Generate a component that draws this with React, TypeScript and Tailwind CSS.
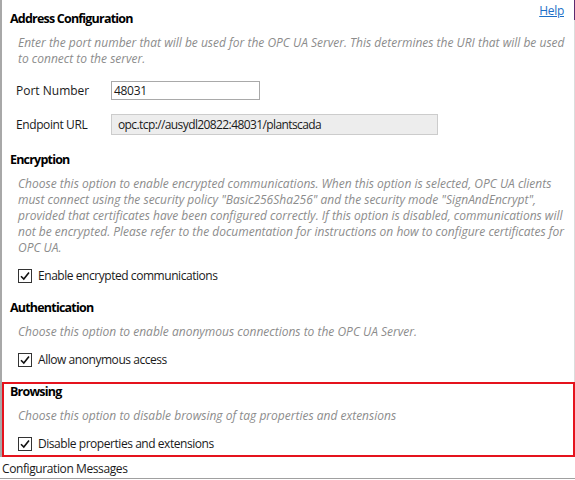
import React from "react";

const font = { fontFamily: '"Open Sans", "Noto Sans", sans-serif' };

function Check({ label }: { label: string }) {
  return (
    <div className="flex items-center h-[14px] mt-[13px] pl-[16px]">
      <div className="w-[14px] h-[14px] border border-[#333333] bg-white flex items-center justify-center shrink-0">
        <svg width="12" height="12" viewBox="0 0 12 12">
          <path d="M2 6.2 L4.8 9 L10 2.5" fill="none" stroke="#111111" strokeWidth="1.6" />
        </svg>
      </div>
      <span className="ml-[6px] text-[12px] leading-[16px] tracking-[-0.45px] text-[#1a1a1a]">{label}</span>
    </div>
  );
}

function Heading({ children, className = "" }: { children: React.ReactNode; className?: string }) {
  return (
    <div className={"pl-[8px] text-[12.5px] leading-[16px] font-bold tracking-[-0.8px] text-black " + className}>{children}</div>
  );
}

function Desc({ children }: { children: React.ReactNode }) {
  return (
    <div className="mt-[8px] pl-[16px] pr-[8px] text-[12px] leading-[16px] italic text-[#8c8c8c]">{children}</div>
  );
}

export default function App() {
  return (
    <div className="w-[575px] h-[480px] bg-white relative overflow-hidden" style={font}>
      <div className="flex flex-col h-[479px] border-b border-[#a0a0a0]">
        <div className="flex flex-col h-[457px] border-l-2 border-[#a8a8a8] border-r border-r-[#dcdcdc] relative">
          <div className="flex justify-between items-start">
            <Heading className="mt-[11px]">Address Configuration</Heading>
            <a className="mt-[3px] mr-[10px] text-[12px] leading-[16px] tracking-[-0.3px] text-[#1c6fc7] underline">Help</a>
          </div>
          <Desc>
            Enter the port number that will be used for the OPC UA Server. This determines the URI that will be used to connect to the server.
          </Desc>
          <div className="flex items-center mt-[14px] pl-[14px] h-[19px]">
            <span className="w-[95px] text-[12px] text-[#1a1a1a]">Port Number</span>
            <div className="w-[149px] h-[19px] border border-[#a9a9a9] bg-white text-[12px] leading-[17px] pl-[2px] tracking-[-0.3px] text-[#1a1a1a]">48031</div>
          </div>
          <div className="flex items-center mt-[14px] pl-[14px] h-[21px]">
            <span className="w-[95px] text-[12px] tracking-[-0.4px] text-[#1a1a1a]">Endpoint URL</span>
            <div className="w-[327px] h-[21px] border border-[#cccccc] bg-[#ededed] text-[12px] leading-[19px] pl-[6px] tracking-[-0.6px] text-[#1a1a1a]">opc.tcp://ausydl20822:48031/plantscada</div>
          </div>
          <Heading className="mt-[17px]">Encryption</Heading>
          <Desc>
            Choose this option to enable encrypted communications. When this option is selected, OPC UA clients must connect using the security policy "Basic256Sha256" and the security mode "SignAndEncrypt", provided that certificates have been configured correctly. If this option is disabled, communications will not be encrypted. Please refer to the documentation for instructions on how to configure certificates for OPC UA.
          </Desc>
          <Check label="Enable encrypted communications" />
          <Heading className="mt-[17px]">Authentication</Heading>
          <Desc>Choose this option to enable anonymous connections to the OPC UA Server.</Desc>
          <Check label="Allow anonymous access" />
          <Heading className="mt-[17px]">Browsing</Heading>
          <Desc>Choose this option to disable browsing of tag properties and extensions</Desc>
          <Check label="Disable properties and extensions" />
          <div className="absolute right-[-2px] top-0 w-[2px] h-[20px] bg-[#5b2a6e]" />
        </div>
        <div className="pl-[2px] mt-[4px] text-[12px] leading-[16px] tracking-[-0.4px] text-[#1a1a1a]">Configuration Messages</div>
      </div>
      <div className="absolute left-[2px] top-[382px] w-[573px] h-[75px] border-2 border-[#e5131d] pointer-events-none" />
    </div>
  );
}
